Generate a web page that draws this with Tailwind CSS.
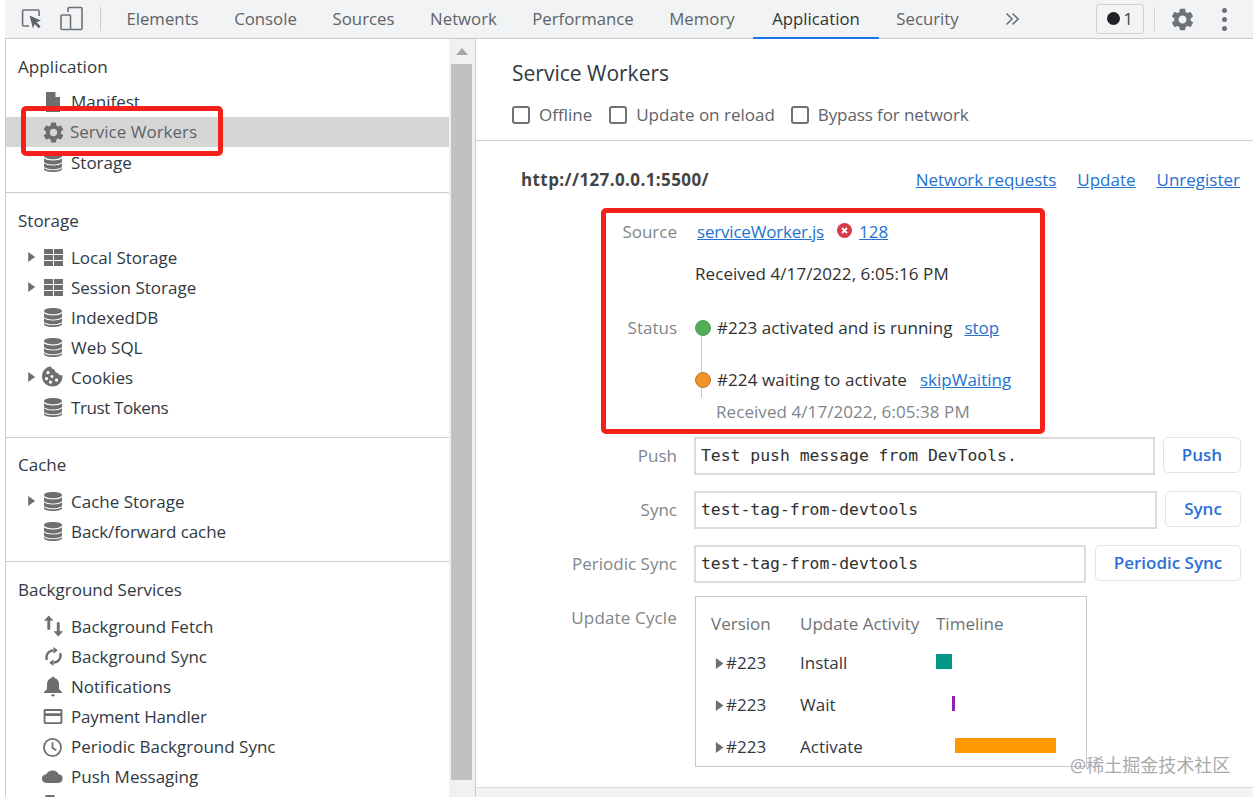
<!DOCTYPE html>
<html lang="en"><head><meta charset="utf-8"><title>Service Workers</title>
<script src="https://cdn.jsdelivr.net/npm/@tailwindcss/browser@4"></script></head>
<body class="bg-white">
<svg class="hidden">
<defs>
<symbol id="gear" viewBox="0 0 24 24"><path fill-rule="evenodd" d="M19.14 12.94c.04-.3.06-.61.06-.94 0-.32-.02-.64-.07-.94l2.03-1.58a.49.49 0 0 0 .12-.61l-1.92-3.32a.488.488 0 0 0-.59-.22l-2.39.96c-.5-.38-1.03-.7-1.62-.94l-.36-2.54a.484.484 0 0 0-.48-.41h-3.84c-.24 0-.43.17-.47.41l-.36 2.54c-.59.24-1.13.57-1.62.94l-2.39-.96c-.22-.08-.47 0-.59.22L2.74 8.87c-.12.21-.08.47.12.61l2.03 1.58c-.05.3-.09.63-.09.94s.02.64.07.94l-2.03 1.58a.49.49 0 0 0-.12.61l1.92 3.32c.12.22.37.29.59.22l2.39-.96c.5.38 1.03.7 1.62.94l.36 2.54c.05.24.24.41.48.41h3.84c.24 0 .44-.17.47-.41l.36-2.54c.59-.24 1.13-.56 1.62-.94l2.39.96c.22.08.47 0 .59-.22l1.92-3.32c.12-.22.07-.47-.12-.61l-2.01-1.58zM12 15.6c-1.98 0-3.6-1.62-3.6-3.6s1.62-3.6 3.6-3.6 3.6 1.62 3.6 3.6-1.62 3.6-3.6 3.6z"/></symbol>
<symbol id="db" viewBox="0 0 18 19"><path d="M0 3C0 1.300 4 0 9 0s9 1.300 9 3-4 3.200-9 3.200S0 4.700 0 3z"/><path d="M0 5.300C1.500 6.800 5 7.500 9 7.500s7.500-.7 9-2.200V8.500c0 1.600-4 3-9 3s-9-1.400-9-3z"/><path d="M0 10.300c1.500 1.500 5 2.200 9 2.200s7.500-.7 9-2.200v3c0 1.600-4 3-9 3s-9-1.400-9-3z"/><path d="M0 15c1.500 1.500 5 2.200 9 2.200s7.500-.7 9-2.200v1.300c0 1.500-4 2.700-9 2.700s-9-1.200-9-2.700z"/></symbol>
<symbol id="table" viewBox="0 0 19 17"><path d="M0 0h9v5H0zM10 0h9v5h-9zM0 6h9v5H0zM10 6h9v5h-9zM0 12h9v5H0zM10 12h9v5h-9z"/></symbol>
<symbol id="tri" viewBox="0 0 10 12"><path d="M1 0l8.400 6L1 12z"/></symbol>
</defs>
</svg>
<div class="relative h-[797px] w-[1253px] overflow-hidden pl-[5px] text-[17px] text-[#303942] font-['Open_Sans','Noto_Sans_CJK_SC',sans-serif]">

<header class="flex h-[39px] items-center border-b border-[#c8c8c8] bg-[#f1f3f4] text-[#5f6368]">
  <svg class="ml-[15px] h-[24px] w-[24px]" viewBox="0 0 24 24" fill="none"><path d="M9 19H3.600a1 1 0 0 1-1-1V4a1 1 0 0 1 1-1h14.500a1 1 0 0 1 1 1v5" stroke="#6e7276" stroke-width="1.600"/><path d="M9.500 8.600l11.400 5-4.400 1.600 4.100 4.100-1.900 1.900-4.100-4.100-1.600 4.400z" fill="#5f6368"/></svg>
  <svg class="ml-[15px] h-[26px] w-[26px]" viewBox="0 0 26 26" fill="none" stroke="#6e7276" stroke-width="1.600"><path d="M9 6V2.500a1 1 0 0 1 1-1h12a1 1 0 0 1 1 1v20a1 1 0 0 1-1 1H12"/><rect x="2" y="9" width="9.500" height="14.500" rx="1"/></svg>
  <div class="ml-[15px] h-[24px] w-[1px] bg-[#ccc]"></div>
  <nav class="ml-[8px] flex h-[38px] items-center text-center text-[16.800px]">
    <a class="w-[107px] leading-[38px]">Elements</a>
    <a class="w-[99px] leading-[38px]">Console</a>
    <a class="w-[97px] leading-[38px]">Sources</a>
    <a class="w-[103px] leading-[38px]">Network</a>
    <a class="w-[136px] leading-[38px]">Performance</a>
    <a class="w-[102px] leading-[38px]">Memory</a>
    <a class="h-[39px] w-[126px] border-b-2 border-[#1a73e8] leading-[38px] text-[#333]">Application</a>
    <a class="w-[97px] leading-[38px]">Security</a>
  </nav>
  <svg class="ml-[29px] h-[14px] w-[14px]" viewBox="0 0 14 14" fill="none" stroke="#6e7276" stroke-width="1.600"><path d="M1.500 1.500L7 7l-5.500 5.500M7.500 1.500L13 7l-5.500 5.500"/></svg>
  <div class="mb-[1px] ml-[77px] flex h-[30px] w-[48px] items-center justify-center gap-[3px] rounded-[3px] border border-[#d0d2d4] text-[#444]"><span class="h-[13px] w-[13px] rounded-full bg-[#202124]"></span><span class="leading-none">1</span></div>
  <div class="ml-[10px] h-[24px] w-[1px] bg-[#d0d2d4]"></div>
  <svg class="ml-[14px] h-[27px] w-[27px] fill-[#6e7276]"><use href="#gear"/></svg>
  <div class="ml-[26px] flex flex-col gap-[4px]"><span class="h-[5px] w-[5px] rounded-full bg-[#6e7276]"></span><span class="h-[5px] w-[5px] rounded-full bg-[#6e7276]"></span><span class="h-[5px] w-[5px] rounded-full bg-[#6e7276]"></span></div>
</header>

<div class="flex h-[758px]">
  <aside class="flex w-[471px] border-r border-[#ccc]">
    <div class="w-[444px] overflow-hidden border-l border-[#ccc] fill-[#6e6e6e]">
      <section class="border-b border-[#ccc] pt-[13px] pb-[15px]">
        <h2 class="mb-[5px] pl-[12px] leading-[30px] tracking-[0.1px]">Application</h2>
        <div class="relative flex h-[30px] items-center pl-[65px]"><svg class="absolute left-[39px] top-[5px] h-[20px] w-[16px]" viewBox="0 0 16 20"><path d="M1 0h9l5 5v15H1z"/><path d="M10.500 .5v4.500h4.500" fill="#fff"/></svg>Manifest</div>
        <div class="relative flex h-[30px] items-center bg-[#d6d6d6] pl-[64px] text-[#5f6368]"><svg class="absolute left-[35px] top-[3px] h-[25px] w-[25px]"><use href="#gear"/></svg>Service Workers</div>
        <div class="relative flex h-[30px] items-center pl-[65px] pt-[2px]"><svg class="absolute left-[38px] top-[6px] h-[19px] w-[18px]"><use href="#db"/></svg>Storage</div>
      </section>
      <section class="border-b border-[#ccc] pt-[13px] pb-[15px]">
        <h2 class="mb-[6px] pl-[12px] leading-[30px]">Storage</h2>
        <div class="relative flex h-[30px] items-center pl-[65px] pt-[2px]"><svg class="absolute left-[21px] top-[10px] h-[10px] w-[9px]"><use href="#tri"/></svg><svg class="absolute left-[38px] top-[7px] h-[17px] w-[19px]"><use href="#table"/></svg>Local Storage</div>
        <div class="relative flex h-[30px] items-center pl-[65px] pt-[2px]"><svg class="absolute left-[21px] top-[10px] h-[10px] w-[9px]"><use href="#tri"/></svg><svg class="absolute left-[38px] top-[7px] h-[17px] w-[19px]"><use href="#table"/></svg>Session Storage</div>
        <div class="relative flex h-[30px] items-center pl-[65px] pt-[2px]"><svg class="absolute left-[38px] top-[6px] h-[19px] w-[18px]"><use href="#db"/></svg>IndexedDB</div>
        <div class="relative flex h-[30px] items-center pl-[65px] pt-[2px]"><svg class="absolute left-[38px] top-[6px] h-[19px] w-[18px]"><use href="#db"/></svg>Web SQL</div>
        <div class="relative flex h-[30px] items-center pl-[65px] pt-[2px]"><svg class="absolute left-[21px] top-[10px] h-[10px] w-[9px]"><use href="#tri"/></svg><svg class="absolute left-[36px] top-[4px] h-[21px] w-[21px]" viewBox="0 0 21 21"><path fill-rule="evenodd" d="M9 .5c.5 2 2 3 3.500 3 0 2 1.500 3.500 3.500 3.500.3 1.500 2 2.500 4.500 2.500.5 6-4 11-10 11S0 16 0 10.500 4 .5 9 .5zM6 5a1.600 1.600 0 1 0 .01 0zM4.500 11a1.600 1.600 0 1 0 .01 0zM10 9a1.500 1.500 0 1 0 .01 0zM8.500 14.500a1.600 1.600 0 1 0 .01 0zM14.500 12.500a1.600 1.600 0 1 0 .01 0z"/></svg>Cookies</div>
        <div class="relative flex h-[30px] items-center pl-[65px] pt-[2px] tracking-[-0.4px]"><svg class="absolute left-[38px] top-[6px] h-[19px] w-[18px]"><use href="#db"/></svg>Trust Tokens</div>
      </section>
      <section class="border-b border-[#ccc] pt-[12px] pb-[15px]">
        <h2 class="mb-[6px] pl-[12px] leading-[30px]">Cache</h2>
        <div class="relative flex h-[30px] items-center pl-[65px] pt-[2px]"><svg class="absolute left-[21px] top-[10px] h-[10px] w-[9px]"><use href="#tri"/></svg><svg class="absolute left-[38px] top-[6px] h-[19px] w-[18px]"><use href="#db"/></svg>Cache Storage</div>
        <div class="relative flex h-[30px] items-center pl-[65px] pt-[2px] tracking-[-0.1px]"><svg class="absolute left-[38px] top-[6px] h-[19px] w-[18px]"><use href="#db"/></svg>Back/forward cache</div>
      </section>
      <section class="pt-[13px]">
        <h2 class="mb-[6px] pl-[12px] leading-[30px]">Background Services</h2>
        <div class="relative flex h-[30px] items-center pl-[65px] pt-[2px]"><svg class="absolute left-[38px] top-[4px] h-[22px] w-[19px]" viewBox="0 0 20 22"><path d="M5 0l5 5.500H6.500V15h-3V5.500H0zM15 22l-5-5.500h3.500V7h3v9.500H20z"/></svg>Background Fetch</div>
        <div class="relative flex h-[30px] items-center pl-[65px] pt-[2px]"><svg class="absolute left-[39px] top-[6px] h-[19px] w-[17px]" viewBox="0 0 18 20" fill="none" stroke="#6e6e6e" stroke-width="2.600"><path d="M2 13.500A7.500 7.500 0 0 1 9 3.500M16 6.500A7.500 7.500 0 0 1 9 16.500"/><path d="M9 0l4.500 3.500L9 7zM9 13l-4.500 3.500L9 20z" fill="#6e6e6e" stroke="none"/></svg>Background Sync</div>
        <div class="relative flex h-[30px] items-center pl-[65px] pt-[2px]"><svg class="absolute left-[38px] top-[5px] h-[21px] w-[18px]" viewBox="0 0 18 21"><path d="M7.500 2a1.500 1.500 0 0 1 3 0c3 .7 4.500 3 4.500 6v5l3 3v1H0v-1l3-3V8c0-3 1.500-5.300 4.500-6zM7 18.500h4a2 2 0 0 1-4 0z"/></svg>Notifications</div>
        <div class="relative flex h-[30px] items-center pl-[65px] pt-[2px] tracking-[-0.15px]"><svg class="absolute left-[37px] top-[8px] h-[15px] w-[20px]" viewBox="0 1 20 16"><path fill-rule="evenodd" d="M1.500 1h17A1.500 1.500 0 0 1 20 2.500v13a1.500 1.500 0 0 1-1.500 1.500h-17A1.500 1.500 0 0 1 0 15.500v-13A1.500 1.500 0 0 1 1.500 1zM2 3v2.500h16V3zM2 8.500V15h16V8.500z"/></svg>Payment Handler</div>
        <div class="relative flex h-[30px] items-center pl-[65px] pt-[2px]"><svg class="absolute left-[37px] top-[7px] h-[19px] w-[19px]" viewBox="0 0 20 20" fill="none" stroke="#6e6e6e" stroke-width="1.800"><circle cx="10" cy="10" r="9"/><path d="M10 4.500V10.500l4 2.500"/></svg>Periodic Background Sync</div>
        <div class="relative flex h-[30px] items-center pl-[65px] pt-[2px]"><svg class="absolute left-[36px] top-[8px] h-[14px] w-[21px]" viewBox="0 0 22 16" preserveAspectRatio="none"><path d="M5 16a5 5 0 0 1-.5-10A7 7 0 0 1 17.500 6.100 5 5 0 0 1 17 16z"/></svg>Push Messaging</div>
        <div class="relative flex h-[30px] items-center pl-[65px]"><svg class="absolute left-[39px] top-[4px] h-[20px] w-[10px]" viewBox="0 0 10 20"><path d="M2 0h6a2 2 0 0 1 2 2v18H0V2a2 2 0 0 1 2-2z"/></svg></div>
      </section>
    </div>
    <div class="flex w-[26px] flex-col bg-[#f1f1f1] pl-[2px]">
      <div class="flex h-[25px] w-[21px] items-center justify-center"><span class="h-0 w-0 border-x-[6px] border-b-[7px] border-x-transparent border-b-[#a6a6a6]"></span></div>
      <div class="h-[716px] w-[21px] bg-[#c1c1c1]"></div>
    </div>
  </aside>

  <main class="flex-1">
    <div class="h-[102px] border-b border-[#d0d0d0] pl-[36px]">
      <h1 class="pt-[19px] text-[21px] leading-[30px] text-[#303942]">Service Workers</h1>
      <div class="mt-[12px] flex items-center text-[#5f6368] leading-[30px]">
        <span class="h-[18px] w-[18px] rounded-[3px] border-2 border-[#6e7276]"></span><span class="ml-[9px]">Offline</span>
        <span class="ml-[17px] h-[18px] w-[18px] rounded-[3px] border-2 border-[#6e7276]"></span><span class="ml-[9px]">Update on reload</span>
        <span class="ml-[16px] h-[18px] w-[18px] rounded-[3px] border-2 border-[#6e7276]"></span><span class="ml-[9px] tracking-[-0.1px]">Bypass for network</span>
      </div>
    </div>
    <div class="relative pl-[36px]">
      <div class="mt-[24px] flex h-[30px] items-center">
        <span class="ml-[9px] font-bold tracking-[0.4px] text-[#444]">http://127.0.0.1:5500/</span>
        <div class="ml-auto mr-[13px] flex gap-[21px] text-[#2472d0] underline"><a class="tracking-[-0.05px]">Network requests</a><a>Update</a><a>Unregister</a></div>
      </div>
      <div class="mt-[22px] flex h-[30px] items-center"><span class="w-[165px] text-right text-[#80868b]">Source</span><a class="ml-[20px] tracking-[-0.2px] text-[#2472d0] underline">serviceWorker.js</a><svg class="-mt-[3px] ml-[13px] h-[15px] w-[15px]" viewBox="0 0 15 15"><circle cx="7.500" cy="7.500" r="7.500" fill="#d93b4a"/><path d="M5 5l5 5M10 5l-5 5" stroke="#fff" stroke-width="1.800"/></svg><a class="ml-[7px] text-[#2472d0] underline">128</a></div>
      <div class="mt-[12px] flex h-[30px] items-center pl-[183px] tracking-[0.07px] text-[#303030]">Received 4/17/2022, 6:05:16 PM</div>
      <div class="relative mt-[24px] flex h-[30px] items-center"><span class="w-[165px] text-right text-[#80868b]">Status</span><span class="z-10 ml-[18px] h-[16px] w-[16px] rounded-full border border-[#4a9a4e] bg-[#52ac56]"></span><span class="ml-[6px] tracking-[0.03px] text-[#303030]">#223 activated and is running</span><a class="ml-[12px] text-[#2472d0] underline">stop</a>
        <span class="absolute left-[189px] top-[22px] h-[63px] w-[1px] bg-[#c8c8c8]"></span>
      </div>
      <div class="mt-[22px] flex h-[30px] items-center"><span class="w-[165px]"></span><span class="z-10 ml-[18px] h-[16px] w-[16px] rounded-full border border-[#b8782c] bg-[#f19329]"></span><span class="ml-[6px] tracking-[0.08px] text-[#303030]">#224 waiting to activate</span><a class="ml-[13px] text-[#2472d0] underline">skipWaiting</a></div>
      <div class="mt-[2px] flex h-[30px] items-center pl-[204px] tracking-[0.07px] text-[#80868b]">Received 4/17/2022, 6:05:38 PM</div>

      <div class="mt-[10px] flex items-start"><span class="w-[165px] pt-[4px] text-right leading-[30px] text-[#80868b]">Push</span><div class="ml-[17px] flex h-[38px] w-[461px] items-center border-2 border-[#dcdcdc] pl-[5px] font-['DejaVu_Sans_Mono',monospace] text-[16.400px] text-[#303030]">Test push message from DevTools.</div><button class="ml-[8px] h-[36px] w-[78px] rounded-[5px] border border-[#e2e4e6] font-semibold text-[#2a6fd6]">Push</button></div>
      <div class="mt-[16px] flex items-start"><span class="w-[165px] pt-[4px] text-right leading-[30px] text-[#80868b]">Sync</span><div class="ml-[17px] flex h-[38px] w-[463px] items-center border-2 border-[#dcdcdc] pl-[5px] font-['DejaVu_Sans_Mono',monospace] text-[16.400px] text-[#303030]">test-tag-from-devtools</div><button class="ml-[8px] h-[36px] w-[76px] rounded-[5px] border border-[#e2e4e6] font-semibold text-[#2a6fd6]">Sync</button></div>
      <div class="mt-[16px] flex items-start"><span class="w-[165px] pt-[4px] text-right leading-[30px] text-[#80868b]">Periodic Sync</span><div class="ml-[17px] flex h-[38px] w-[392px] items-center border-2 border-[#dcdcdc] pl-[5px] font-['DejaVu_Sans_Mono',monospace] text-[16.400px] text-[#303030]">test-tag-from-devtools</div><button class="ml-[9px] h-[36px] w-[146px] rounded-[5px] border border-[#e2e4e6] font-semibold text-[#2a6fd6]">Periodic Sync</button></div>
      <div class="mt-[13px] flex items-start"><span class="w-[165px] pt-[7px] text-right leading-[30px] tracking-[0.15px] text-[#80868b]">Update Cycle</span>
        <div class="ml-[18px] h-[171px] w-[392px] border border-[#c8c8c8] pl-[15px] pt-[12px]">
          <div class="flex h-[30px] items-center text-[#6e7276]"><span class="w-[89px]">Version</span><span class="w-[136px]">Update Activity</span><span>Timeline</span></div>
          <div class="mt-[9px] flex h-[30px] items-center"><span class="flex w-[89px] items-center pl-[4px]"><svg class="mr-[2px] h-[11px] w-[9px] fill-[#6e6e6e]"><use href="#tri"/></svg>#223</span><span class="w-[136px]">Install</span><span class="mb-[4px] h-[15px] w-[16px] bg-[#009688]"></span></div>
          <div class="mt-[12px] flex h-[30px] items-center"><span class="flex w-[89px] items-center pl-[4px]"><svg class="mr-[2px] h-[11px] w-[9px] fill-[#6e6e6e]"><use href="#tri"/></svg>#223</span><span class="w-[136px]">Wait</span><span class="mb-[4px] ml-[16px] h-[15px] w-[3px] bg-[#8e24aa]"></span></div>
          <div class="mt-[12px] flex h-[30px] items-center"><span class="flex w-[89px] items-center pl-[4px]"><svg class="mr-[2px] h-[11px] w-[9px] fill-[#6e6e6e]"><use href="#tri"/></svg>#223</span><span class="w-[136px]">Activate</span><span class="mb-[4px] ml-[19px] h-[15px] w-[101px] bg-[#ff9800]"></span></div>
        </div>
      </div>
    </div>
  </main>
</div>

<div class="absolute bottom-0 left-[476px] h-[10px] w-[777px] border-t border-[#d8dadc] bg-[#f1f3f4]"></div>
<div class="absolute left-[1070px] top-[752px] text-[18px] text-[#a9a9a9]">@稀土掘金技术社区</div>
<div class="absolute left-[21px] top-[106px] h-[50px] w-[202px] rounded-[5px] border-[5px] border-[#f5201a]"></div>
<div class="absolute left-[601px] top-[208px] h-[226px] w-[444px] rounded-[5px] border-[5px] border-[#f5201a]"></div>
</div>
</body></html>
